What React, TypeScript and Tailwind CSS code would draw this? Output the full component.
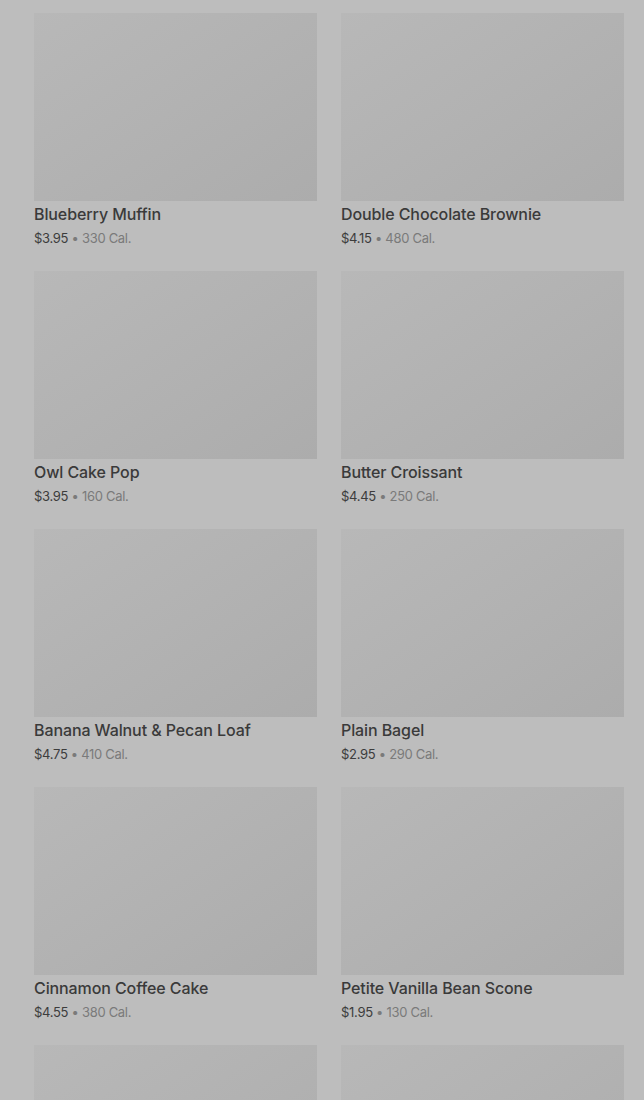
const items = [
  { name: "Blueberry Muffin", price: "$3.95", cal: "330 Cal." },
  { name: "Double Chocolate Brownie", price: "$4.15", cal: "480 Cal." },
  { name: "Owl Cake Pop", price: "$3.95", cal: "160 Cal." },
  { name: "Butter Croissant", price: "$4.45", cal: "250 Cal." },
  { name: "Banana Walnut & Pecan Loaf", price: "$4.75", cal: "410 Cal." },
  { name: "Plain Bagel", price: "$2.95", cal: "290 Cal." },
  { name: "Cinnamon Coffee Cake", price: "$4.55", cal: "380 Cal." },
  { name: "Petite Vanilla Bean Scone", price: "$1.95", cal: "130 Cal." },
];

export default function App() {
  return (
    <div
      className="h-[1100px] w-[644px] overflow-hidden bg-[#bdbdbd] pl-[34px] pr-[20px] pt-[13px]"
      style={{ fontFamily: "Inter, 'Noto Sans', sans-serif" }}
    >
      <div className="grid grid-cols-2 gap-x-[24px] gap-y-[24px]">
        {items.map((it) => (
          <div key={it.name} className="flex flex-col">
            <div className="h-[188px] w-full bg-gradient-to-br from-[#b8b8b8] to-[#acacac]" />
            <div className="mt-[2px] text-[16px] leading-[22px] font-medium text-[#3a3a3a] tracking-[-0.1px]">
              {it.name}
            </div>
            <div className="mt-[4px] text-[13px] leading-[18px] tracking-[-0.3px] text-[#3c3c3c]">
              {it.price}
              <span className="text-[#7a7a7a]"> • {it.cal}</span>
            </div>
          </div>
        ))}
        <div className="h-[188px] w-full bg-gradient-to-br from-[#b8b8b8] to-[#acacac]" />
        <div className="h-[188px] w-full bg-gradient-to-br from-[#b8b8b8] to-[#acacac]" />
      </div>
    </div>
  );
}
